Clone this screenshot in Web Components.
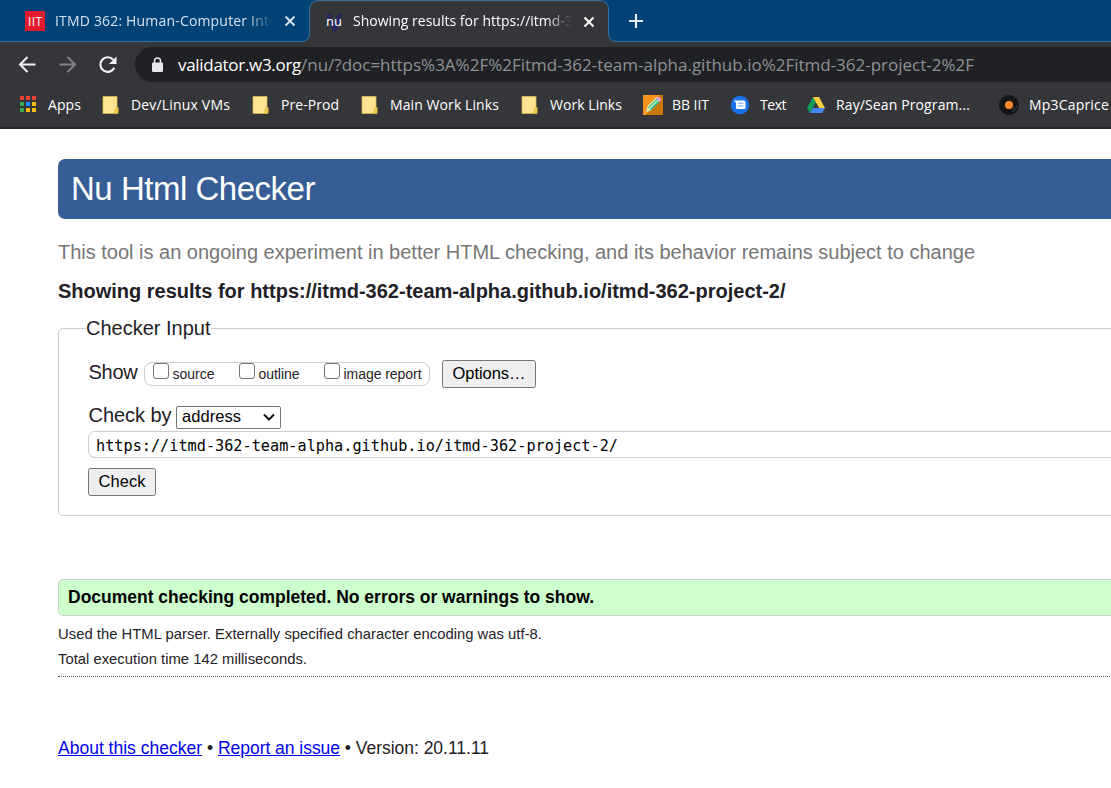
<!DOCTYPE html>
<html lang="en">
<head>
<meta charset="utf-8">
<title>Showing results for https://itmd-362-team-alpha.github.io/itmd-362-project-2/</title>
<style>
  html, body { margin: 0; height: 100%; overflow: hidden; background: #fff; }
  body { font-family: "Liberation Sans", Arial, sans-serif; }
</style>
</head>
<body>
<browser-window>
  <nu-checker></nu-checker>
</browser-window>

<template id="browser-window">
  <style>
    :host { display: flex; flex-direction: column; width: 1111px; height: 788px; overflow: hidden; }
    .chrome { font-family: "Open Sans", "Noto Sans", sans-serif; color: #fff; background: #35363a; height: 129px; flex: none; overflow: hidden; }
    .tabs { display: flex; height: 42px; background: #004275; box-shadow: inset 0 -1px #35719c; }
    .bar { display: flex; align-items: center; height: 46px; }
    .nav { display: flex; width: 135px; flex: none; box-sizing: border-box; padding-left: 17px; gap: 20px; }
    .nav svg { display: block; flex: none; }
    .url { flex: 1; height: 35px; background: #202124; border-radius: 18px 0 0 18px; display: flex; align-items: center; font-size: 17px; margin-top: -1px; }
    .url svg { margin: 0 14px 0 16px; flex: none; }
    .url span { color: #8e9196; }
    .marks { display: flex; align-items: center; box-sizing: border-box; height: 41px; padding-bottom: 5px; font-size: 14px; border-bottom: 2px solid #242528; white-space: nowrap; }
    .plus { align-self: center; margin: 0 0 0 19px; }
    .page { flex: 1; overflow: hidden; }
  </style>
  <div class="chrome">
    <div class="tabs">
      <browser-tab style="--w:309px;--pad:25px;--tw:218px;--ink:#d3e3f0">
        <svg slot="icon" width="20" height="20"><rect width="20" height="20" fill="#e31b2e"/><text x="10" y="14.5" text-anchor="middle" font-family="Open Sans" font-size="12" fill="#fff" textLength="14">IIT</text></svg>
        <fit-text w="248">ITMD 362: Human-Computer Interact</fit-text>
      </browser-tab>
      <browser-tab active style="--w:300px;--pad:14px;--tw:219px;--ink:#fff">
        <svg slot="icon" width="20" height="20"><path d="M2 2h5l3.500 9L14 2h4l-5 17H9z" fill="#28265f"/><text x="10" y="14" text-anchor="middle" font-family="DejaVu Sans" font-size="12.5" fill="#fff" textLength="16">nu</text></svg>
        <fit-text w="236">Showing results for https://itmd-362</fit-text>
      </browser-tab>
      <svg class="plus" width="16" height="16"><path d="M8 1v14M1 8h14" stroke="#e4edf4" stroke-width="2.2"/></svg>
    </div>
    <div class="bar">
      <div class="nav">
        <svg width="20" height="20" fill="none" stroke="#f1f3f4" stroke-width="2"><path d="M18.500 9.500H3.500M10.500 2 3 9.500l7.500 7.500"/></svg>
        <svg width="20" height="20" fill="none" stroke="#828387" stroke-width="2"><path d="M2.500 9.500h15M10.500 2l7.500 7.500-7.500 7.500"/></svg>
        <svg width="20" height="20"><path d="M17.300 12.700A7.300 7.300 0 1 1 16.200 4.800" fill="none" stroke="#f1f3f4" stroke-width="2.100"/><path d="M19.500 1.500v7.500h-7.500z" fill="#f1f3f4"/></svg>
      </div>
      <div class="url">
        <svg width="13" height="16"><rect x="1" y="5.500" width="11" height="9.500" rx="1.200" fill="#e8eaed"/><path d="M3.500 6V4a3 3 0 0 1 6 0v2" fill="none" stroke="#e8eaed" stroke-width="1.500"/></svg>
        <fit-text w="123">validator.w3.org</fit-text><span><fit-text w="673">/nu/?doc=https%3A%2F%2Fitmd-362-team-alpha.github.io%2Fitmd-362-project-2%2F</fit-text></span>
      </div>
    </div>
    <div class="marks">
      <book-mark style="--at:18px;--gap:10px"><svg slot="icon" width="20" height="20"><g fill="#ea4335"><path d="M2 1h4v4H2zM8 1h4v4H8zM14 1h4v4h-4z"/></g><path d="M2 7h4v4H2zM2 13h4v4H2z" fill="#34a853"/><path d="M8 7h4v4H8z" fill="#1a8cff"/><path d="M14 7h4v4h-4zM8 13h4v4H8zM14 13h4v4h-4z" fill="#fbbc05"/></svg><fit-text w="33">Apps</fit-text></book-mark>
      <book-mark folder style="--at:21px"><fit-text w="99">Dev/Linux VMs</fit-text></book-mark>
      <book-mark folder style="--at:22px"><fit-text w="58">Pre-Prod</fit-text></book-mark>
      <book-mark folder style="--at:22px"><fit-text w="109">Main Work Links</fit-text></book-mark>
      <book-mark folder style="--at:22px"><fit-text w="72">Work Links</fit-text></book-mark>
      <book-mark style="--at:21px;--gap:9px"><svg slot="icon" width="20" height="20"><path d="M0 0h20v20H0z" fill="#f7941d"/><path d="M17 0h3v20H3z" fill="#c97500"/><path d="m3 17 1.500-5L14 2.500l3.500 3.500L8 15.500z" fill="#35b8a2"/><path d="m6 14 8.500-8.500M4.500 12 14 2.500" stroke="#d8f5a8" stroke-width="1.200"/><path d="m3 17 1.500-5L8 15.500z" fill="#ffe3a8"/><path d="m13 3.500 1.500-1.500q1-.7 2 .2l1.300 1.400q.8 1 0 1.800L16.500 7z" fill="#e7a0d5"/></svg><fit-text w="37">BB IIT</fit-text></book-mark>
      <book-mark style="--at:21px;--gap:10px"><svg slot="icon" width="20" height="20"><circle cx="10" cy="10" r="9.200" fill="#1a73e8"/><path d="M4 5.500h10q1.500 0 1.500 1.500v5.500q0 1.500-1.500 1.500H7.500Q6 14 6 12.500V8z" fill="#fff"/><path d="M8 8.200h5.500M8 11h5.500" stroke="#6ba5f0" stroke-width="1.100"/></svg><fit-text w="26">Text</fit-text></book-mark>
      <book-mark style="--at:20px;--gap:10px"><svg slot="icon" width="20" height="20"><path d="M7 2 1 13l3 5 6-11z" fill="#0f9d58"/><path d="M7 2h6l6 11h-6z" fill="#ffcd40"/><path d="M7 13h12l-3 5H4z" fill="#4285f4"/></svg><fit-text w="134">Ray/Sean Program...</fit-text></book-mark>
      <book-mark style="--at:29px;--gap:10px"><svg slot="icon" width="20" height="20"><circle cx="10" cy="10" r="10" fill="#151515"/><path d="M13 17a8 8 0 0 0 5-6M13 14.500a5.500 5.500 0 0 0 2.500-3" fill="none" stroke="#444"/><circle cx="10" cy="10" r="4" fill="#ff8a2b"/></svg><fit-text w="80">Mp3Caprice</fit-text></book-mark>
    </div>
  </div>
  <div class="page"><slot></slot></div>
</template>

<template id="browser-tab">
  <style>
    :host { display: flex; align-items: center; box-sizing: border-box; width: var(--w); height: 42px; padding-left: var(--pad); font-size: 14px; color: var(--ink); flex: none; position: relative; }
    :host([active]) { background: #35363a; border: 1px solid #35719c; border-width: 1px 1px 0; border-radius: 9px 9px 0 0; }
    .title { width: var(--tw); margin-left: 10px; padding-bottom: 2px; overflow: hidden; white-space: nowrap; -webkit-mask-image: linear-gradient(90deg, #000 88%, transparent); mask-image: linear-gradient(90deg, #000 88%, transparent); }
    :host([active]) .title { margin-left: 9px; padding-bottom: 3px; }
    .x { margin-left: 11px; flex: none; }
    ::slotted(svg) { display: block; flex: none; }
    .foot { display: none; position: absolute; bottom: 0; }
    :host([active]) .foot { display: block; }
    .l { left: -9px; } .r { right: -9px; }
  </style>
  <slot name="icon"></slot><div class="title"><slot></slot></div>
  <svg class="x" width="12" height="12"><path d="m1.500 1.500 9 9m0-9-9 9" stroke="currentColor" stroke-width="2"/></svg>
  <svg class="foot l" width="9" height="9"><path d="M0 9q8.500 0 8.500-9H9v9z" fill="#35363a"/><path d="M0 8.500q8.500 0 8.500-8.500" fill="none" stroke="#35719c"/></svg>
  <svg class="foot r" width="9" height="9"><path d="M9 9Q.5 9 .5 0H0v9z" fill="#35363a"/><path d="M9 8.500Q.5 8.500.5 0" fill="none" stroke="#35719c"/></svg>
</template>

<template id="book-mark">
  <style>
    :host { display: flex; align-items: center; margin-left: var(--at); flex: none; height: 34px; }
    ::slotted(svg), svg { display: block; flex: none; margin-right: var(--gap, 11px); }
    ::slotted(fit-text) { padding-bottom: 1px; }
    svg { display: none; }
    :host([folder]) svg { display: block; }
  </style>
  <slot name="icon"></slot>
  <svg width="18" height="20"><path d="M1 1.500h14v11h1v6H1z" fill="#ffe591" stroke="#d9b84c" stroke-width=".8"/><path d="M13 18v-3q0-2.500 3-2.500v4q0 2-2 2z" fill="#f2ce55" stroke="#d9b13b" stroke-width=".7"/></svg>
  <slot></slot>
</template>

<template id="nu-checker">
  <style>
    :host { display: block; width: 1100px; padding-left: 58px; color: #1f2126; font-family: "Liberation Sans", Arial, sans-serif; }
    h1 { margin: 30px 0 0; height: 60px; line-height: 60px; padding-left: 13px; background: #365d95; color: #fff; font-size: 33px; font-weight: 400; border-radius: 7px; }
    .tag { margin: 20px 0 0; font-size: 20px; line-height: 26px; color: #767676; }
    h2 { margin: 13px 0 0; font-size: 20px; line-height: 26px; }
    fieldset { margin: 11px 0 0; padding: 0 0 0 29px; border: 1px solid #ccc; border-radius: 5px; height: 201px; box-sizing: border-box; font-size: 20px; }
    legend { margin-left: -2px; padding: 0; line-height: 26px; height: 26px; }
    .show { display: flex; align-items: center; height: 28px; margin-top: 19px; padding-left: .5px; }
    .show > fit-text, .by > fit-text { padding-bottom: 4px; }
    .pill { display: flex; align-items: center; box-sizing: border-box; width: 286px; height: 24px; margin: 0 12px 0 6.500px; border: 1px solid #ccc; border-radius: 8px; font-size: 14px; padding-left: 7px; }
    .by { display: flex; align-items: center; height: 24px; margin-top: 17px; padding-left: .5px; }
    .select { display: flex; align-items: center; justify-content: space-between; box-sizing: border-box; width: 105px; height: 23px; border: 1px solid #767676; border-radius: 2px; margin-left: 4.500px; padding: 0 5px; font-size: 16.500px; color: #000; }
    .select fit-text { padding-bottom: 2px; }
    .input { box-sizing: border-box; height: 27px; border: 1px solid #ccc; border-radius: 7px; margin: 2px 0 10px; padding-left: 7px; font: 15.200px/28px "DejaVu Sans Mono", monospace; color: #000; }
    .ok { box-sizing: border-box; height: 37px; line-height: 34px; margin-top: 63px; padding-left: 9px; border: 1px solid #ccc; border-radius: 5px; background: #cfc; color: #000; font-size: 17.500px; font-weight: 700; }
    .msg { margin: 0; font-size: 14.800px; line-height: 25px; }
    .line { border-bottom: 1px dotted #555; height: 4px; }
    footer { margin-top: 58px; line-height: 26px; font-size: 17.500px; white-space: nowrap; }
    a { color: #00e; text-decoration: underline; }
  </style>
  <h1><fit-text w="244">Nu Html Checker</fit-text></h1>
  <p class="tag"><fit-text w="917">This tool is an ongoing experiment in better HTML checking, and its behavior remains subject to change</fit-text></p>
  <h2><fit-text w="727.5">Showing results for https://itmd-362-team-alpha.github.io/itmd-362-project-2/</fit-text></h2>
  <fieldset>
    <legend><fit-text w="124.5">Checker Input</fit-text></legend>
    <div class="show"><fit-text w="49">Show</fit-text>
      <div class="pill"><check-box style="width:86px"><fit-text w="42">source</fit-text></check-box><check-box style="width:85px"><fit-text w="41">outline</fit-text></check-box><check-box><fit-text w="78">image report</fit-text></check-box></div>
      <push-button style="width:94px"><fit-text w="73">Options…</fit-text></push-button>
    </div>
    <div class="by"><fit-text w="83">Check by</fit-text><div class="select"><fit-text w="59">address</fit-text><svg width="12" height="8"><path d="m1 1.500 5 5 5-5" fill="none" stroke="#111" stroke-width="2"/></svg></div></div>
    <div class="input"><fit-text w="522">https://itmd-362-team-alpha.github.io/itmd-362-project-2/</fit-text></div>
    <push-button style="width:68px"><fit-text w="47">Check</fit-text></push-button>
  </fieldset>
  <div class="ok"><fit-text w="526">Document checking completed. No errors or warnings to show.</fit-text></div>
  <p class="msg" style="margin-top:6px"><fit-text w="484">Used the HTML parser. Externally specified character encoding was utf-8.</fit-text></p>
  <p class="msg"><fit-text w="249">Total execution time 142 milliseconds.</fit-text></p>
  <div class="line"></div>
  <footer><a><fit-text w="144">About this checker</fit-text></a><fit-text w="16">&nbsp;•&nbsp;</fit-text><a><fit-text w="122">Report an issue</fit-text></a><fit-text w="149">&nbsp;• Version: 20.11.11</fit-text></footer>
</template>

<template id="check-box">
  <style>
    :host { display: flex; align-items: center; flex: none; }
    i { box-sizing: border-box; width: 16px; height: 16px; border: 1px solid #767676; border-radius: 3px; background: #fff; margin: -6px 3.500px 0 1px; }
  </style>
  <i></i><slot></slot>
</template>

<template id="push-button">
  <style>
    :host { display: flex; align-items: center; justify-content: center; box-sizing: border-box; height: 28px; border: 1px solid #767676; border-radius: 2.500px; background: #efefef; color: #000; font-size: 16.500px; padding-bottom: 2px; }
  </style>
  <slot></slot>
</template>

<template id="fit-text">
  <style>:host { display: inline-block; white-space: nowrap; text-decoration: inherit; }</style><slot></slot>
</template>

<script>
  const define = (name, extra) => customElements.define(name, class extends HTMLElement {
    constructor() {
      super();
      this.attachShadow({ mode: 'open' }).append(document.getElementById(name).content.cloneNode(true));
    }
    connectedCallback() { if (extra) extra(this); }
  });
  ['browser-window', 'browser-tab', 'book-mark', 'nu-checker', 'check-box', 'push-button'].forEach(n => define(n));
  // Spreads the label over the width given in its "w" attribute.
  define('fit-text', el => {
    const target = +el.getAttribute('w');
    const natural = el.getBoundingClientRect().width;
    el.style.letterSpacing = (target - natural) / el.textContent.length + 'px';
  });
</script>
</body>
</html>
